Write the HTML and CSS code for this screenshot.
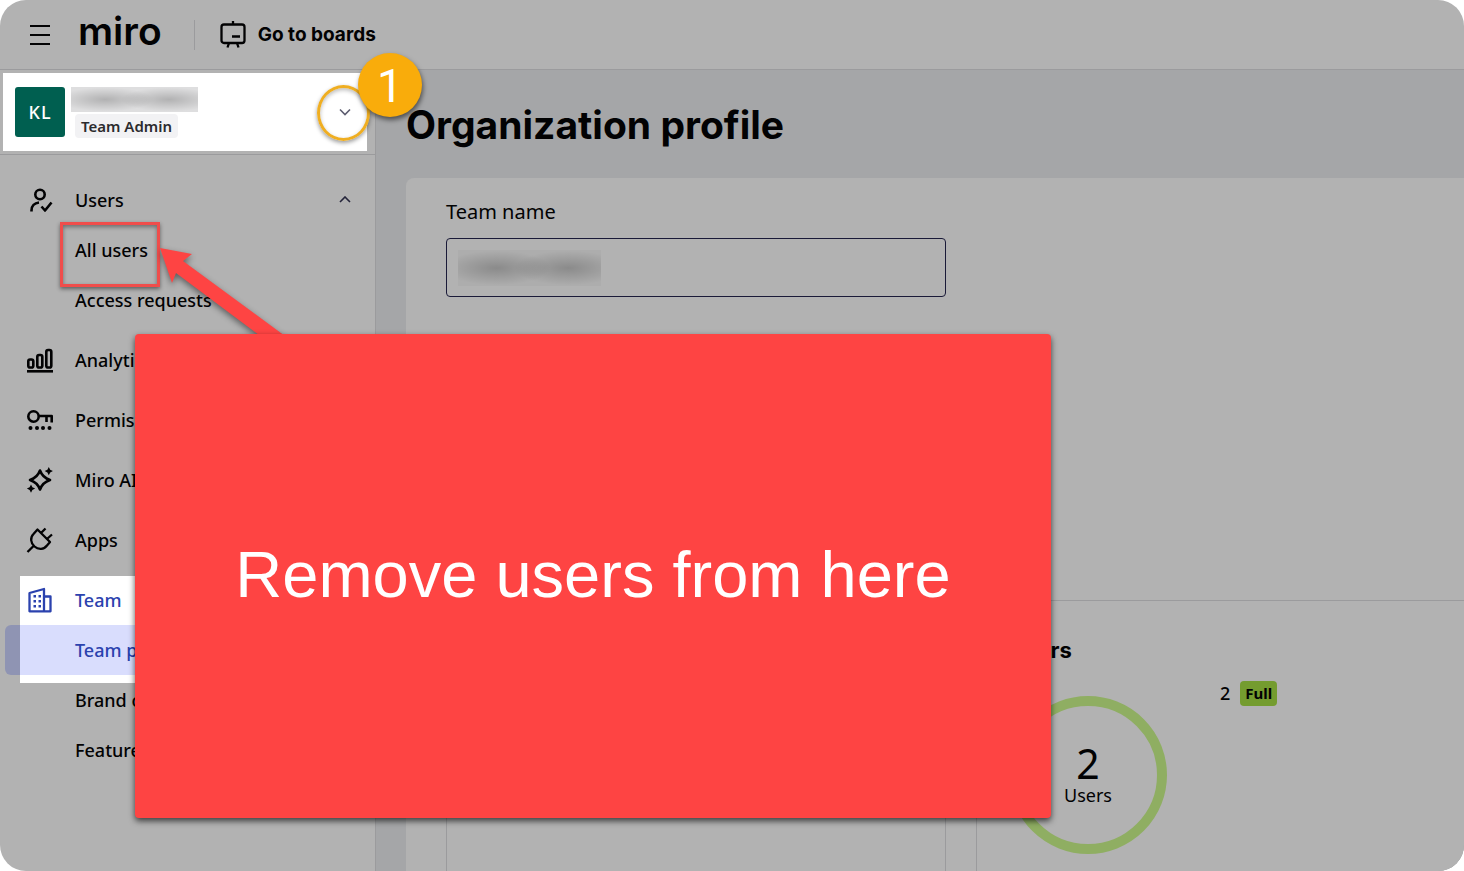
FILE: index.html
```html
<!DOCTYPE html>
<html lang="en">
  <head>
    <meta charset="UTF-8" />
    <meta name="viewport" content="width=device-width, initial-scale=1.0" />
    <title>Organization profile - Miro</title>
    <link rel="stylesheet" href="styles.css">
  </head>
  <body>
    <div class="page">
      <header class="topbar">
        <button class="menu-btn" aria-label="Menu">
          <svg width="20" height="20" viewBox="0 0 20 20"><path d="M0 1h20M0 10h20M0 19h20" /></svg>
        </button>
        <a class="logo" href="#">miro</a>
        <a class="boards-link" href="#">
          <svg class="icon" width="28" height="28" viewBox="0 0 28 28">
            <rect x="2.500" y="3.500" width="23" height="18.500" rx="2.500" />
            <path d="M14 0v3M10 22l-1.500 4.500M18 22l1.500 4.500M13 15.500h8" />
          </svg>
          Go to boards
        </a>
      </header>

      <div class="layout">
        <aside class="sidebar">
          <div class="account">
            <div class="avatar">KL</div>
            <div class="account-info">
              <div class="redacted redacted-name"></div>
              <span class="role">Team Admin</span>
            </div>
            <button class="chevron-btn" aria-label="Switch team">
              <svg class="chevron" width="12" height="8" viewBox="0 0 12 8"><path d="M1 1.500l5 5 5-5" /></svg>
            </button>
          </div>

          <nav class="nav">
            <div class="nav-group">
              <a class="nav-item" href="#">
                <svg class="icon" width="28" height="28" viewBox="0 0 28 28">
                  <circle cx="14" cy="8.500" r="4.700" />
                  <path d="M5.500 25.500v-1c0-4.500 3-7.500 7.500-8M15.500 20.500l3.500 4 6.500-8" />
                </svg>
                Users
                <svg class="chevron" width="12" height="8" viewBox="0 0 12 8"><path d="M1 6l5-5 5 5" /></svg>
              </a>
              <a class="nav-item nav-sub" href="#">All users</a>
              <a class="nav-item nav-sub" href="#">Access requests</a>
            </div>
            <div class="nav-group">
              <a class="nav-item" href="#">
                <svg class="icon" width="28" height="28" viewBox="0 0 28 28">
                  <rect x="2.300" y="13.500" width="5" height="8" rx="1.800" />
                  <rect x="11.300" y="9" width="5" height="12.500" rx="1.800" />
                  <rect x="20.300" y="4" width="5" height="17.500" rx="1.800" />
                  <path d="M1 25.300h26" />
                </svg>
                Analytics
              </a>
            </div>
            <div class="nav-group">
              <a class="nav-item" href="#">
                <svg class="icon" width="28" height="28" viewBox="0 0 28 28">
                  <circle cx="7.500" cy="10.500" r="5.200" />
                  <path d="M13 10h12.700v6.500M20.500 10v6" />
                  <g class="icon-dots">
                    <circle cx="4.500" cy="22" r="2" />
                    <circle cx="11" cy="22" r="2" />
                    <circle cx="17" cy="22" r="2" />
                    <circle cx="23.500" cy="22" r="2" />
                  </g>
                </svg>
                Permissions
              </a>
            </div>
            <div class="nav-group">
              <a class="nav-item" href="#">
                <svg class="icon" width="28" height="28" viewBox="0 0 28 28">
                  <path d="M14 4.500q2.500 7 10 9.500q-7.500 2.500-10 9.500q-2.500-7-10-9.500q7.500-2.500 10-9.500z" />
                  <g class="icon-dots">
                    <path d="M22.800 1l1.400 2.700 2.700 1.400-2.700 1.400-1.400 2.700-1.400-2.700-2.700-1.400 2.700-1.400z" />
                    <path d="M5 18.500l1.400 2.700 2.700 1.400-2.700 1.400-1.400 2.700-1.400-2.700-2.700-1.400 2.700-1.400z" />
                  </g>
                </svg>
                Miro AI
              </a>
            </div>
            <div class="nav-group">
              <a class="nav-item" href="#">
                <svg class="icon icon-plug" width="28" height="28" viewBox="0 0 28 28">
                  <path d="M11.500 3.500l12.500 12.500-3 3.500c-3 4-8.500 4.500-12.500 1s-4.500-9-1-12.500zM7.500 20l-6 6M15.500 6.500l4-4M21.500 12.500l4.500-4" />
                </svg>
                Apps
              </a>
            </div>
            <div class="nav-group nav-group-team">
              <a class="nav-item nav-current" href="#">
                <svg class="icon" width="28" height="28" viewBox="0 0 28 28">
                  <path d="M3.500 25.300v-18.300l14.500-4v22.300zM18 10.500h6.500v14.800h-6.500" />
                  <g class="icon-dots">
                    <rect x="7.500" y="9" width="2.500" height="2.500" /><rect x="12.500" y="9" width="2.500" height="2.500" />
                    <rect x="7.500" y="14" width="2.500" height="2.500" /><rect x="12.500" y="14" width="2.500" height="2.500" />
                    <rect x="7.500" y="19" width="2.500" height="2.500" /><rect x="12.500" y="19" width="2.500" height="2.500" />
                  </g>
                </svg>
                Team
              </a>
              <a class="nav-item nav-sub nav-current nav-selected" href="#">Team profile</a>
              <a class="nav-item nav-sub" href="#">Brand center</a>
              <a class="nav-item nav-sub" href="#">Features</a>
            </div>
          </nav>
        </aside>

        <main class="main">
          <h1>Organization profile</h1>
          <div class="panel">
            <div class="field">
              <label for="team-name">Team name</label>
              <div class="field-control">
                <input type="text" id="team-name" />
                <div class="redacted redacted-value"></div>
              </div>
            </div>

            <div class="cards">
              <section class="card"></section>
              <section class="card">
                <h2>Users</h2>
                <div class="users-summary">
                  <div class="donut">
                    <span class="donut-number">2</span>
                    <span class="donut-label">Users</span>
                  </div>
                  <div class="legend">2 <span class="license">Full</span></div>
                </div>
              </section>
            </div>
          </div>
        </main>
      </div>

      <!-- tutorial callouts -->
      <div class="outline-box"></div>
      <div class="ring"></div>
      <div class="step">1</div>
      <svg class="arrow" width="130" height="100" viewBox="0 0 130 100">
        <path d="M0 7l32 6-9 7 102 75v5h-18l-91-68-4 10z" />
      </svg>
      <div class="callout">Remove users from here</div>
    </div>
  </body>
</html>
```
FILE: styles.css
```css
* {
  margin: 0;
  padding: 0;
  box-sizing: border-box;
}

body {
  font-family: "Noto Sans", sans-serif;
  background: #fff;
  color: #020203;
}

a {
  color: inherit;
  text-decoration: none;
}

button {
  background: none;
  border: none;
  cursor: pointer;
}

.page {
  position: relative;
  display: flex;
  flex-direction: column;
  height: 100vh;
  overflow: hidden;
  background: #b2b2b2;
  border-radius: 26px;
}

.icon {
  flex: none;
  fill: none;
  stroke: currentColor;
  stroke-width: 2.6;
  stroke-linejoin: round;
}

.icon-dots {
  fill: currentColor;
  stroke: none;
}

.icon-plug {
  stroke-width: 2.3;
}

.chevron {
  fill: none;
  stroke: #24243a;
  stroke-width: 1.6;
}

/* top bar */
.topbar {
  flex: none;
  display: flex;
  align-items: center;
  height: 70px;
  padding: 0 30px;
  border-bottom: 1px solid #9b9b9d;
}

.menu-btn {
  display: flex;
}

.menu-btn svg {
  fill: none;
  stroke: #020203;
  stroke-width: 2;
}

.logo {
  margin-left: 28px;
  padding-bottom: 8px;
  font-family: Inter, sans-serif;
  font-size: 39px;
  font-weight: 600;
  line-height: 40px;
}

.boards-link {
  display: flex;
  align-items: center;
  gap: 11px;
  height: 30px;
  margin-left: 32px;
  padding-left: 24px;
  border-left: 1px solid #9b9b9d;
  font-family: Inter, sans-serif;
  font-size: 19px;
  font-weight: 700;
}

.boards-link .icon {
  stroke-width: 2.3;
}

.layout {
  flex: 1;
  display: flex;
  min-height: 0;
}

/* sidebar */
.sidebar {
  flex: none;
  width: 376px;
  border-right: 1px solid #9b9b9d;
}

.account {
  display: flex;
  align-items: center;
  height: 85px;
  padding: 3px 8px 3px 3px;
  border-bottom: 1px solid #9b9b9d;
  background: #fff content-box;
}

.avatar {
  width: 50px;
  height: 50px;
  margin-left: 12px;
  border-radius: 3px;
  background: #005f50;
  color: #fff;
  font-size: 18px;
  font-weight: 500;
  line-height: 50px;
  letter-spacing: 1px;
  text-align: center;
}

.account-info {
  flex: 1;
  padding-left: 6px;
}

.redacted {
  background: radial-gradient(ellipse 38% 48% at 27% 50%, #0003, #0000),
    radial-gradient(ellipse 38% 48% at 77% 50%, #0003, #0000);
}

.redacted-name {
  width: 127px;
  height: 25px;
  background-color: #dededf;
}

.role {
  display: inline-block;
  margin: 2px 0 0 4px;
  padding: 0 6px;
  border-radius: 4px;
  background: #f2f2f4;
  color: #2b2b2e;
  font-size: 15px;
  font-weight: 600;
  line-height: 24px;
}

.chevron-btn {
  display: flex;
  padding: 16px;
}

.chevron-btn .chevron {
  stroke: #5d5d70;
}

.nav {
  display: flex;
  flex-direction: column;
  gap: 10px;
  padding: 20px 0 0 5px;
}

.nav-item {
  display: flex;
  align-items: center;
  gap: 21px;
  height: 50px;
  padding: 0 24px 0 21px;
  font-size: 18px;
  font-weight: 500;
}

.nav-item .chevron {
  margin-left: auto;
}

.nav-sub {
  padding-left: 70px;
}

.nav-group-team {
  background: linear-gradient(#fff, #fff) 15px 1px / 100% 107px no-repeat;
}

.nav-current {
  color: #2b42ae;
}

.nav-current .icon {
  stroke-width: 2.3;
}

.nav-selected {
  border-radius: 6px;
  background: linear-gradient(to right, #8f94b3 15px, #d9ddfd 15px);
}

/* content */
.main {
  flex: 1;
  display: flex;
  flex-direction: column;
  min-width: 0;
  padding: 30px 0 0 30px;
  background: #a5a6a8;
}

h1 {
  margin-bottom: 28px;
  font-family: Inter, sans-serif;
  font-size: 39px;
  font-weight: 700;
  line-height: 50px;
}

.panel {
  flex: 1;
  min-height: 0;
  padding: 20px 0 0 40px;
  border-radius: 8px 0 0 0;
  background: #b2b2b2;
}

.field {
  max-width: 500px;
  margin-bottom: 303px;
}

.field label {
  display: block;
  margin-bottom: 12px;
  font-size: 20px;
  line-height: 28px;
}

.field-control {
  position: relative;
}

.field input {
  display: block;
  width: 100%;
  height: 59px;
  padding: 0 16px;
  border: 1px solid #1a1a38;
  border-radius: 4px;
  background: transparent;
  font: inherit;
}

.redacted-value {
  position: absolute;
  top: 12px;
  left: 12px;
  width: 143px;
  height: 36px;
  background-color: #adadad;
}

.cards {
  display: grid;
  grid-template-columns: 500px 520px;
  gap: 30px;
}

.card {
  min-height: 320px;
  padding: 33px 32px;
  border: 1px solid #9b9b9d;
}

h2 {
  font-family: Inter, sans-serif;
  font-size: 22px;
  font-weight: 700;
  line-height: 32px;
}

.users-summary {
  display: flex;
  gap: 53px;
  margin-top: 15px;
}

.donut {
  display: flex;
  flex-direction: column;
  align-items: center;
  justify-content: center;
  width: 158px;
  height: 158px;
  margin-top: 15px;
  border: 10px solid #8fae62;
  border-radius: 50%;
}

.donut-number {
  font-size: 41px;
  line-height: 40px;
}

.donut-label {
  font-size: 18px;
  line-height: 24px;
}

.legend {
  display: flex;
  gap: 10px;
  height: 25px;
  font-size: 18px;
  font-weight: 500;
  line-height: 25px;
}

.license {
  padding: 0 5px;
  border-radius: 4px;
  background: #749c2f;
  font-size: 15px;
  font-weight: 700;
}

/* callouts */
.outline-box {
  position: absolute;
  top: 222px;
  left: 60px;
  width: 100px;
  height: 65px;
  border: 3px solid #f04d4b;
  box-shadow: 0 2px 4px #0007, inset 0 2px 4px #0006;
}

.ring {
  position: absolute;
  top: 85px;
  left: 317px;
  width: 53px;
  height: 56px;
  border: 3px solid #efae22;
  border-radius: 50%;
  box-shadow: 0 2px 4px #0006, inset 0 2px 4px #0004;
}

.step {
  position: absolute;
  top: 53px;
  left: 358px;
  width: 64px;
  height: 64px;
  border-radius: 50%;
  background: #f9ac0b;
  box-shadow: 1px 3px 5px #0008;
  color: #fff;
  font-family: Roboto, sans-serif;
  font-size: 46px;
  line-height: 66px;
  text-align: center;
}

.arrow {
  position: absolute;
  top: 241px;
  left: 160px;
  fill: #fe4443;
  filter: drop-shadow(0 3px 3px #0007);
}

.callout {
  position: absolute;
  top: 334px;
  left: 135px;
  display: flex;
  align-items: center;
  justify-content: center;
  width: 916px;
  height: 484px;
  padding-bottom: 4px;
  border-radius: 4px;
  background: #fe4443;
  box-shadow: 0 3px 6px #000a;
  color: #fff;
  font-family: "Liberation Sans", sans-serif;
  font-size: 65px;
}
```
